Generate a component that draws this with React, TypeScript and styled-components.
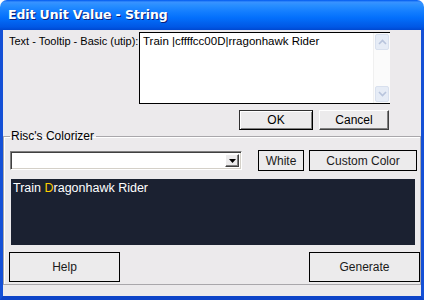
import React from "react";
import styled, { createGlobalStyle } from "styled-components";

const Global = createGlobalStyle`
  html, body { margin: 0; padding: 0; background: #ffffff; }
  body { width: 424px; height: 300px; overflow: hidden; }
  * { box-sizing: border-box; }
`;

const Window = styled.div`
  width: 424px;
  height: 300px;
  display: flex;
  flex-direction: column;
  font-family: "Liberation Sans", Arial, sans-serif;
  font-size: 11px;
  color: #000;
`;

const TitleBar = styled.div`
  height: 30px;
  flex: none;
  border-radius: 7px 7px 0 0;
  background: linear-gradient(
    #0058ee 0%,
    #3a93ff 7%,
    #288eff 18%,
    #127dff 40%,
    #036ffc 60%,
    #0262ee 76%,
    #0057e5 90%,
    #0048d0 100%
  );
  display: flex;
  align-items: center;
  padding: 0 0 1px 8px;
`;

const Title = styled.span`
  color: #fff;
  font-family: "DejaVu Sans", "Liberation Sans", sans-serif;
  font-weight: bold;
  font-size: 12.5px;
  letter-spacing: -0.1px;
  text-shadow: 1px 1px 0 #0a1f7a;
`;

const Body = styled.div`
  flex: 1;
  background: #eceaec;
  border-left: 3px solid #1450d6;
  border-right: 3px solid #1450d6;
  border-bottom: 4px solid #0d43c8;
  display: flex;
  flex-direction: column;
`;

const TopRow = styled.div`
  display: flex;
  align-items: flex-start;
  padding: 2px 0 0 6px;
`;

const Label = styled.span`
  width: 130px;
  padding-top: 3px;
  white-space: nowrap;
`;

const TextArea = styled.div`
  width: 251px;
  height: 72px;
  background: #fff;
  border: 1px solid #000;
  border-right: none;
  display: flex;
`;

const TextContent = styled.div`
  flex: 1;
  padding: 2px 3px;
  font-size: 11.5px;
  line-height: 13px;
  white-space: nowrap;
`;

const ScrollBar = styled.div`
  width: 17px;
  background: #fbfbfb;
  border-left: 1px solid #f0f0f0;
  display: flex;
  flex-direction: column;
  justify-content: space-between;
  padding: 1px 1px;
`;

const ScrollBtn = styled.div`
  height: 16px;
  border-radius: 2px;
  background: #e6ecf6;
  border: 1px solid #d8e0ee;
  display: flex;
  align-items: center;
  justify-content: center;
`;

const DialogButtons = styled.div`
  display: flex;
  justify-content: flex-end;
  gap: 6px;
  padding: 6px 32px 0 0;
`;

const BevelButton = styled.button<{ $w: number; $default?: boolean }>`
  width: ${(p) => p.$w}px;
  height: 20px;
  font: inherit;
  font-size: 12px;
  color: #000;
  background: #ecebec;
  padding: 0;
  border: 1px solid;
  border-color: ${(p) =>
    p.$default ? "#303030 #000 #000 #303030" : "#ffffff #404040 #404040 #ffffff"};
  box-shadow: ${(p) =>
    p.$default
      ? "inset 1px 1px 0 #fff, inset -1px -1px 0 #808080"
      : "inset -1px -1px 0 #808080"};
`;

const GroupBox = styled.fieldset`
  margin: 0;
  padding: 0 0 2px 0;
  border: 1px solid #a9a7ab;
  box-shadow: inset 1px 1px 0 #fff;
  min-width: 0;
`;

const Legend = styled.legend`
  margin-left: 6px;
  padding: 0 2px 0 1px;
  font-size: 12px;
  line-height: 12px;
`;

const ColorRow = styled.div`
  display: flex;
  align-items: center;
  margin-top: 8px;
  padding-left: 6px;
  height: 21px;
`;

const Combo = styled.div`
  width: 232px;
  height: 19px;
  background: #fff;
  border: 1px solid;
  border-color: #808080 #fff #fff #808080;
  box-shadow: inset 1px 1px 0 #404040, inset -1px -1px 0 #d4d0c8;
  display: flex;
  justify-content: flex-end;
  padding: 2px;
`;

const ComboArrow = styled.div`
  width: 14px;
  height: 13px;
  background: #ecebec;
  border: 1px solid;
  border-color: #fff #404040 #404040 #fff;
  box-shadow: inset -1px -1px 0 #808080;
  display: flex;
  align-items: center;
  justify-content: center;
`;

const FlatButton = styled.button<{ $w: number; $h: number }>`
  width: ${(p) => p.$w}px;
  height: ${(p) => p.$h}px;
  font: inherit;
  font-size: 12px;
  color: #1a1a1a;
  background: #ecebec;
  border: 1px solid #000;
  padding: 0;
`;

const ColorButtons = styled.div`
  display: flex;
  gap: 5px;
  margin-left: 16px;
`;

const Preview = styled.div`
  margin: 8px 0 0 7px;
  width: 404px;
  height: 66px;
  background: #1b2131;
  color: #fff;
  font-size: 12.5px;
  line-height: 14px;
  padding: 2px 2px;
`;

const Gold = styled.span`
  color: #ffcc00;
`;

const BottomRow = styled.div`
  display: flex;
  justify-content: space-between;
  margin-top: 7px;
  padding-left: 5px;
`;

const Chevron = ({ up }: { up?: boolean }) => (
  <svg width="9" height="6" viewBox="0 0 9 6">
    <path
      d={up ? "M1 5 L4.5 1.5 L8 5" : "M1 1 L4.5 4.5 L8 1"}
      fill="none"
      stroke="#b8c4dc"
      strokeWidth="1.6"
    />
  </svg>
);

export default function App() {
  return (
    <>
      <Global />
      <Window>
        <TitleBar>
          <Title>Edit Unit Value - String</Title>
        </TitleBar>
        <Body>
          <TopRow>
            <Label>Text - Tooltip - Basic (utip):</Label>
            <TextArea>
              <TextContent>Train |cffffcc00D|rragonhawk Rider</TextContent>
              <ScrollBar>
                <ScrollBtn>
                  <Chevron up />
                </ScrollBtn>
                <ScrollBtn>
                  <Chevron />
                </ScrollBtn>
              </ScrollBar>
            </TextArea>
          </TopRow>
          <DialogButtons>
            <BevelButton $w={74} $default>
              OK
            </BevelButton>
            <BevelButton $w={70}>Cancel</BevelButton>
          </DialogButtons>
          <GroupBox>
            <Legend>Risc's Colorizer</Legend>
            <ColorRow>
              <Combo>
                <ComboArrow>
                  <svg width="7" height="4" viewBox="0 0 7 4">
                    <path d="M0 0 H7 L3.5 4 Z" fill="#000" />
                  </svg>
                </ComboArrow>
              </Combo>
              <ColorButtons>
                <FlatButton $w={46} $h={21}>
                  White
                </FlatButton>
                <FlatButton $w={108} $h={21}>
                  Custom Color
                </FlatButton>
              </ColorButtons>
            </ColorRow>
            <Preview>
              Train <Gold>D</Gold>ragonhawk Rider
            </Preview>
            <BottomRow>
              <FlatButton $w={111} $h={30}>
                Help
              </FlatButton>
              <FlatButton $w={111} $h={30}>
                Generate
              </FlatButton>
            </BottomRow>
          </GroupBox>
        </Body>
      </Window>
    </>
  );
}
